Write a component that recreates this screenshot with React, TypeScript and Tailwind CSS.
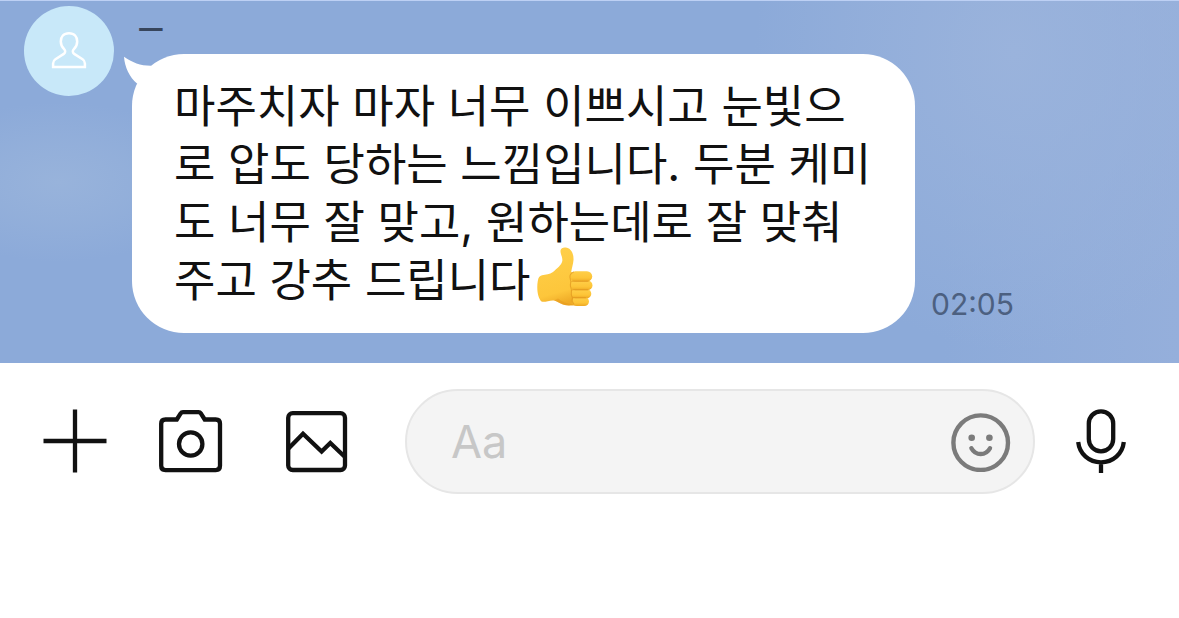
import React from "react";

function Avatar() {
  return (
    <svg viewBox="0 0 90 90" className="mt-[5px] size-[90px] shrink-0" role="img" aria-label="프로필">
      <circle cx="45" cy="45" r="45" fill="#c8e8f9" />
      <path
        d="M45 27.2C39.6 27.2 36.8 31 36.8 35.4C36.8 39 38.2 41.4 40.3 43.4C41.6 44.7 41.5 46.6 39.8 47.9L31.4 53.2C29.7 54.3 29.1 55.6 29.1 57.4V61.1H60.9V57.4C60.9 55.6 60.3 54.3 58.6 53.2L50.2 47.9C48.5 46.6 48.4 44.7 49.7 43.4C51.8 41.4 53.2 39 53.2 35.4C53.2 31 50.4 27.2 45 27.2Z"
        fill="none"
        stroke="#fff"
        strokeWidth="2.5"
      />
    </svg>
  );
}

function BubbleTail() {
  return (
    <svg viewBox="0 0 32 36" className="absolute -left-2 top-0 h-9 w-8" aria-hidden="true">
      <path d="M0 2.7C8 8.5 17 11.8 27 11.7L32 20L20 32L13 29.5C5.5 23 .8 13.5 0 2.7Z" fill="#fff" />
    </svg>
  );
}

function ThumbsUp() {
  return (
    <svg
      viewBox="0 0 57 60"
      className="-mt-6 -mb-2 ml-[6px] inline-block h-[60px] w-[57px] align-middle"
      role="img"
      aria-label="👍"
    >
      <defs>
        <linearGradient id="hand" x1="0.2" y1="0" x2="0.4" y2="1">
          <stop offset="0" stopColor="#ffd04a" />
          <stop offset="0.8" stopColor="#fdc63b" />
          <stop offset="1" stopColor="#efab27" />
        </linearGradient>
        <linearGradient id="finger" x1="0" y1="0" x2="0" y2="1">
          <stop offset="0" stopColor="#ffcf49" />
          <stop offset="0.65" stopColor="#fdc437" />
          <stop offset="1" stopColor="#eda824" />
        </linearGradient>
      </defs>
      <path
        d="M23.5 3.5C24 .7 27 0 30 .8C34.5 2 36.8 7 36.5 13C36.2 17 34.8 21 34.2 25L42 28L42 57C38 59 31 59 26 57.5C22 56 20 54 17 53.5C13 52.8 8 55.5 4.5 54.5C.8 51 -.6 42 .8 34C1.2 30.5 2.5 28.7 5 28.2C9 27.5 12.5 27.5 16 25C20 21.5 24.5 18 25.3 14C25.8 10 23.2 7 23.5 3.5Z"
        fill="url(#hand)"
      />
      <path d="M17 53.5C21 54 23.5 58.5 32 58.6L36 57C29 57 25 54.5 21 51.5Z" fill="#e5981d" opacity=".5" />
      <rect x="35" y="49.8" width="17" height="9.2" rx="4.6" fill="url(#finger)" />
      <rect x="34.3" y="42.2" width="20" height="9" rx="4.5" fill="url(#finger)" />
      <rect x="33.6" y="33.6" width="21.9" height="9.6" rx="4.8" fill="url(#finger)" />
      <rect x="33.2" y="24.2" width="22" height="10.4" rx="5.2" fill="url(#finger)" />
      <path
        d="M36.5 25C33 26.3 32 29.5 33.5 33C34.4 34.5 33.3 36.5 33.4 38.5C33.5 41 35 42 34.4 44.5C34 47 34.5 49 35.4 50.8C34.8 53 35.3 55.3 36.8 57M35 34.3H51M35.5 42.8H50.5M36 50.8H48.5"
        fill="none"
        stroke="#dc901b"
        strokeWidth="1.1"
        strokeLinecap="round"
        opacity=".6"
      />
    </svg>
  );
}

const iconProps = {
  fill: "none",
  stroke: "currentColor",
  strokeWidth: 4.3,
  className: "block h-16 w-full",
} as const;

function PlusIcon() {
  return (
    <svg viewBox="0 0 64 64" {...iconProps}>
      <path d="M32 .5V63.5M.5 32H63.5" />
    </svg>
  );
}

function CameraIcon() {
  return (
    <svg viewBox="0 0 64 64" {...iconProps}>
      <path d="M6.5 10.5H17.8L21.5 4.6Q22.4 3.2 24 3.2H39.5Q41 3.2 42 4.6L45.7 10.5H56.7Q61 10.5 61 14.8V56.8Q61 61.1 56.7 61.1H6.5Q2.2 61.1 2.2 56.8V14.8Q2.2 10.5 6.5 10.5Z" />
      <circle cx="31.7" cy="35" r="11.7" />
    </svg>
  );
}

function PictureIcon() {
  return (
    <svg viewBox="0 0 64 64" {...iconProps}>
      <rect x="3.2" y="4.2" width="56.8" height="56.8" rx="4.5" />
      <path d="M3.5 39.5L18 24.8L36.6 42.6L45.3 34L59.5 47.5" />
    </svg>
  );
}

function MicIcon() {
  return (
    <svg viewBox="0 0 52 64" {...iconProps}>
      <rect x="13.8" y="2.3" width="24.4" height="40" rx="12.2" />
      <path d="M3.2 33C4.5 45 14 53.3 26 53.3S47.5 45 48.8 33M26 53.3V64" />
    </svg>
  );
}

function SmileIcon() {
  return (
    <svg viewBox="0 0 60 60" className="block size-[60px]" fill="none" stroke="currentColor" strokeWidth="4.4">
      <circle cx="29.7" cy="30.7" r="27.3" />
      <circle cx="20.7" cy="25.7" r="3.3" fill="currentColor" stroke="none" />
      <circle cx="38.4" cy="25.7" r="3.3" fill="currentColor" stroke="none" />
      <path d="M20.4 36.2C24.7 44 34.7 44 39 36.2" strokeLinecap="round" />
    </svg>
  );
}

export default function App() {
  return (
    <div className="min-h-screen bg-white font-[Inter,'Noto_Sans_CJK_KR',sans-serif] text-[#111]">
      <main className="border-t border-[#bdd0f4] bg-[#8caad9] bg-[radial-gradient(ellipse_260px_300px_at_86%_14%,#9ab3dc_0%,#9ab3dc88_50%,transparent_100%),radial-gradient(ellipse_150px_80px_at_5%_50%,#98b3db_0%,#98b3db88_50%,transparent_100%),linear-gradient(90deg,transparent_80%,#95afdb_100%)] pb-[30px] pl-6">
        <article className="flex items-start gap-[18px]">
          <Avatar />
          <div className="min-w-0">
            <h2 className="h-[53px] pl-[6px] pt-[9px] text-[28px] font-bold leading-[42px] text-[#37455c]">ㅡ</h2>
            <div className="flex items-end gap-4">
              <div className="relative max-w-[783px] rounded-[52px] bg-white px-[42px] pb-[23px] pt-6">
                <BubbleTail />
                <p className="text-[45px] leading-[58px]">
                  마주치자 마자 너무 이쁘시고 눈빛으로 압도 당하는 느낌입니다. 두분 케미도 너무 잘 맞고, 원하는데로 잘 맞춰 주고
                  강추 드립니다
                  <ThumbsUp />
                </p>
              </div>
              <time dateTime="02:05" className="pb-[10px] text-[30px] leading-[38px] text-[#4c6080]">
                02:05
              </time>
            </div>
          </div>
        </article>
      </main>
      <form
        className="flex items-center pb-[26px] pl-[43px] pr-[52px] pt-[26px]"
        onSubmit={(event) => event.preventDefault()}
      >
        <div className="flex shrink-0 items-center pb-px">
          <button type="button" aria-label="추가" className="w-16">
            <PlusIcon />
          </button>
          <button type="button" aria-label="카메라" className="ml-[52px] w-16">
            <CameraIcon />
          </button>
          <button type="button" aria-label="사진" className="ml-[62px] w-16">
            <PictureIcon />
          </button>
        </div>
        <div className="ml-14 mr-10 flex h-[105px] min-w-0 flex-1 items-center rounded-full border-2 border-[#e6e6e6] bg-[#f4f4f4] pl-11 pr-[22px]">
          <input
            type="text"
            aria-label="메시지"
            placeholder="Aa"
            className="min-w-0 flex-1 bg-transparent text-[45px] leading-[58px] outline-none placeholder:text-[#c7c7c7]"
          />
          <button type="button" aria-label="이모티콘" className="shrink-0 text-[#7b7b7b]">
            <SmileIcon />
          </button>
        </div>
        <button type="button" aria-label="음성" className="w-[52px] shrink-0 pb-px">
          <MicIcon />
        </button>
      </form>
    </div>
  );
}
